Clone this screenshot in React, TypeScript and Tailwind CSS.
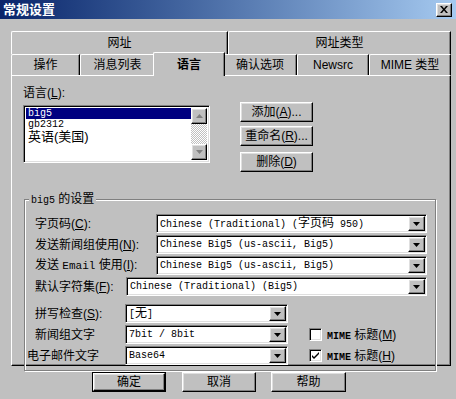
import React from "react";

const raised =
  "border border-t-white border-l-white border-r-black border-b-black shadow-[inset_-1px_-1px_0_#808080,inset_1px_1px_0_#dfdfdf]";
const sunken =
  "border border-t-[#808080] border-l-[#808080] border-r-white border-b-white shadow-[inset_1px_1px_0_#000,inset_-1px_-1px_0_#dfdfdf]";
const sans = "font-['Liberation_Sans','Noto_Sans_CJK_SC',sans-serif]";
const mono = "font-['Liberation_Mono','Noto_Sans_CJK_SC',monospace]";

function U({ c }: { c: string }) {
  return <span className="underline">{c}</span>;
}

function Arrow({ color = "#000" }: { color?: string }) {
  return (
    <svg width="7" height="4" viewBox="0 0 7 4">
      <polygon points="0,0 7,0 3.5,4" fill={color} />
    </svg>
  );
}

function Select({ cls, children }: { cls: string; children: React.ReactNode }) {
  return (
    <div className={`${sunken} bg-white h-[19px] flex items-center ${cls}`}>
      <div className={`flex-1 pl-[3px] ${mono} text-[10px] leading-[14px] whitespace-nowrap overflow-hidden text-black`}>
        {children}
      </div>
      <div className={`${raised} bg-[#c0c0c0] w-[17px] h-[15px] mr-[1px] flex items-center justify-center`}>
        <Arrow />
      </div>
    </div>
  );
}

function Btn({ children, cls = "" }: { children: React.ReactNode; cls?: string }) {
  return (
    <div
      className={`${raised} bg-[#c0c0c0] h-[20px] flex items-center justify-center ${sans} text-[12px] text-black ${cls}`}
    >
      {children}
    </div>
  );
}

function Tab({ children, cls }: { children: React.ReactNode; cls: string }) {
  return (
    <div
      className={`border-t border-l border-t-white border-l-white border-r border-r-black shadow-[inset_-1px_0_0_#808080] rounded-tl-[2px] flex items-center justify-center ${sans} text-[12px] text-black ${cls}`}
    >
      {children}
    </div>
  );
}

function Check({ on }: { on: boolean }) {
  return (
    <div className={`${sunken} bg-white w-[13px] h-[13px] flex items-center justify-center`}>
      {on && (
        <svg width="7" height="7" viewBox="0 0 7 7">
          <path d="M0 3 L0 5 L2 7 L7 2 L7 0 L2 5 Z" fill="#000" />
        </svg>
      )}
    </div>
  );
}

export default function App() {
  return (
    <div className="w-[456px] h-[399px] bg-[#c0c0c0] flex flex-col overflow-hidden">
      {/* Title bar */}
      <div className="h-[19px] bg-linear-to-r from-[#0a246a] to-[#a6caf0] flex items-center justify-between pl-[3px] pr-[4px]">
        <span className={`${sans} text-[13px] font-bold text-white leading-[19px]`}>常规设置</span>
        <div className={`${raised} bg-[#c0c0c0] w-[16px] h-[14px] flex items-center justify-center`}>
          <svg width="8" height="7" viewBox="0 0 8 7">
            <path d="M0 0 L2 0 L4 2.5 L6 0 L8 0 L5 3.5 L8 7 L6 7 L4 4.5 L2 7 L0 7 L3 3.5 Z" fill="#000" />
          </svg>
        </div>
      </div>

      <div className="pl-[11px] pt-[12px]">
        {/* Tab row 1 */}
        <div className="flex w-[440px] h-[23px]">
          <Tab cls="w-[217px] h-[23px]">网址</Tab>
          <Tab cls="flex-1 h-[23px]">网址类型</Tab>
        </div>
        {/* Tab row 2 */}
        <div className="flex items-end w-[440px] h-[21px]">
          <Tab cls="w-[69px] h-[21px]">操作</Tab>
          <Tab cls="w-[75px] h-[21px]">消息列表</Tab>
          <div
            className={`relative z-10 w-[72px] -mx-[2px] h-[24px] -mb-[1px] bg-[#c0c0c0] border-t border-l border-t-white border-l-white border-r border-r-black shadow-[inset_-1px_0_0_#808080] rounded-tl-[2px] flex items-center justify-center ${sans} text-[12px] font-bold text-black`}
          >
            语言
          </div>
          <Tab cls="w-[74px] h-[21px]">确认选项</Tab>
          <Tab cls="w-[72px] h-[21px]">Newsrc</Tab>
          <Tab cls="flex-1 h-[21px]">MIME 类型</Tab>
        </div>

        {/* Panel */}
        <div className="w-[440px] h-[291px] border border-t-white border-l-white border-r-black border-b-black shadow-[inset_-1px_-1px_0_#808080] pl-[11px]">
          <div className="flex">
            <div className="w-[187px]">
              <div className={`mt-[10px] h-[14px] leading-[14px] ${sans} text-[12px] text-black`}>
                语言(<U c="L" />):
              </div>
              <div className={`${sunken} mt-[5px] h-[58px] bg-white flex p-[2px]`}>
                <div className="flex-1 flex flex-col">
                  <div className={`bg-[#000080] text-white h-[11px] ${mono} text-[10px] leading-[11px] pl-[2px]`}>
                    big5
                  </div>
                  <div className={`h-[11px] ${mono} text-[10px] leading-[11px] pl-[2px] text-black`}>gb2312</div>
                  <div className={`h-[13px] ${sans} text-[13px] leading-[13px] pl-[2px] text-black`}>英语(美国)</div>
                </div>
                <div className="w-[16px] flex flex-col">
                  <div className={`${raised} bg-[#c0c0c0] h-[16px] flex items-center justify-center`}>
                    <svg width="7" height="4" viewBox="0 0 7 4">
                      <polygon points="0,4 7,4 3.5,0" fill="#808080" />
                    </svg>
                  </div>
                  <div className="flex-1 bg-[repeating-conic-gradient(#ffffff_0%_25%,#c0c0c0_0%_50%)] bg-size-[2px_2px]" />
                  <div className={`${raised} bg-[#c0c0c0] h-[16px] flex items-center justify-center`}>
                    <Arrow color="#808080" />
                  </div>
                </div>
              </div>
            </div>
            <div className="ml-[30px] w-[73px] mt-[26px] flex flex-col">
              <Btn>
                添加(<U c="A" />)...
              </Btn>
              <Btn cls="mt-[4px]">
                重命名(<U c="R" />)...
              </Btn>
              <Btn cls="mt-[6px]">
                删除(<U c="D" />)
              </Btn>
            </div>
          </div>

          {/* Group box */}
          <div className="relative mt-[27px] ml-[1px] w-[412px] h-[172px] border border-[#808080] shadow-[inset_1px_1px_0_#fff,1px_1px_0_#fff] pt-[14px] pl-[10px]">
            <div className={`absolute -top-[8px] left-[4px] bg-[#c0c0c0] px-[2px] h-[14px] leading-[14px] ${sans} text-[12px] text-black`}>
              <span className={`${mono} text-[10px]`}>big5</span> 的设置
            </div>
            <div className="flex items-center h-[19px]">
              <div className={`w-[121px] ${sans} text-[12px] text-black`}>
                字页码(<U c="C" />):
              </div>
              <Select cls="w-[271px]">
                Chinese (Traditional) (<span className={`${sans} text-[12px]`}>字页码</span> 950)
              </Select>
            </div>
            <div className="flex items-center h-[19px] mt-[2px]">
              <div className={`w-[121px] ${sans} text-[12px] text-black`}>
                发送新闻组使用(<U c="N" />):
              </div>
              <Select cls="w-[271px]">Chinese Big5 (us-ascii, Big5)</Select>
            </div>
            <div className="flex items-center h-[19px] mt-[2px]">
              <div className={`w-[121px] ${sans} text-[12px] text-black whitespace-nowrap`}>
                发送 <span className={`${mono} text-[11px]`}>Email</span> 使用(<U c="I" />):
              </div>
              <Select cls="w-[271px]">Chinese Big5 (us-ascii, Big5)</Select>
            </div>
            <div className="flex items-center h-[19px] mt-[2px]">
              <div className={`w-[91px] ${sans} text-[12px] text-black`}>
                默认字符集(<U c="F" />):
              </div>
              <Select cls="w-[301px]">Chinese (Traditional) (Big5)</Select>
            </div>
            <div className="flex items-center h-[19px] mt-[8px]">
              <div className={`w-[90px] ${sans} text-[12px] text-black`}>
                拼写检查(<U c="S" />):
              </div>
              <Select cls="w-[163px]">
                [<span className={`${sans} text-[12px]`}>无</span>]
              </Select>
            </div>
            <div className="flex items-center h-[19px] mt-[2px]">
              <div className={`w-[90px] ${sans} text-[12px] text-black`}>新闻组文字</div>
              <Select cls="w-[163px]">7bit / 8bit</Select>
              <div className="ml-[21px]">
                <Check on={false} />
              </div>
              <div className={`ml-[5px] ${sans} text-[12px] text-black whitespace-nowrap`}>
                <span className={`${mono} text-[10px] font-bold`}>MIME</span> 标题(<U c="M" />)
              </div>
            </div>
            <div className="flex items-center h-[19px] mt-[2px]">
              <div className={`-ml-[8px] w-[98px] ${sans} text-[12px] text-black`}>电子邮件文字</div>
              <Select cls="w-[163px]">Base64</Select>
              <div className="ml-[21px]">
                <Check on={true} />
              </div>
              <div className={`ml-[5px] ${sans} text-[12px] text-black whitespace-nowrap`}>
                <span className={`${mono} text-[10px] font-bold`}>MIME</span> 标题(<U c="H" />)
              </div>
            </div>
          </div>
        </div>

        {/* Bottom buttons */}
        <div className="flex mt-[6px] ml-[81px]">
          <div className="border border-black w-[74px] h-[20px] flex">
            <div className={`flex-1 ${raised} bg-[#c0c0c0] flex items-center justify-center ${sans} text-[12px] text-black`}>
              确定
            </div>
          </div>
          <Btn cls="ml-[16px] w-[74px]">取消</Btn>
          <Btn cls="ml-[15px] w-[75px]">帮助</Btn>
        </div>
      </div>
    </div>
  );
}
